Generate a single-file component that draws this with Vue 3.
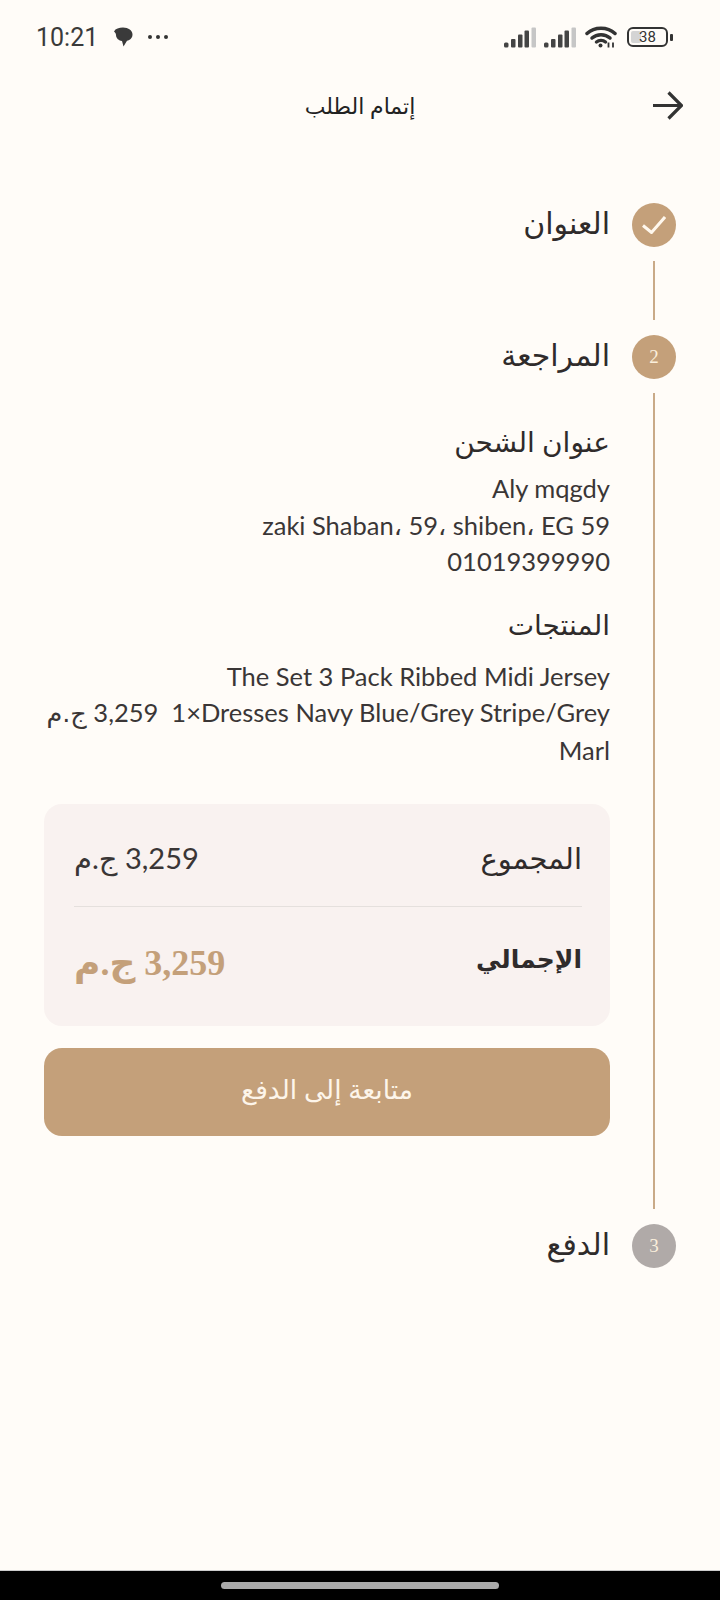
<script setup>
const steps = { done: 'العنوان', active: 'المراجعة', next: 'الدفع' }
</script>

<template>
  <div class="page">
    <div class="status" dir="ltr">
      <div class="status-left">
        <span class="time">10:21</span>
        <svg class="bubble" width="20" height="20" viewBox="0 0 20 20">
          <path d="M1 4.500C2.500 1.500 6 .5 10 .5c5.500 0 9.500 3 9.500 7 0 3.500-2.500 5.700-5.500 6.300L10.500 19.500 9 14C6 13.600 3 11.500 3 8 3 6.500 2 5.500 1 4.500z" fill="#3a3a3a" />
        </svg>
        <span class="dots"><i></i><i></i><i></i></span>
      </div>
      <div class="status-right">
        <svg width="32" height="21" viewBox="0 0 32 21">
          <rect x="0" y="15.500" width="4.500" height="5" rx="1.500" fill="#444" />
          <rect x="7" y="12" width="4.500" height="8.500" rx="1" fill="#444" />
          <rect x="14" y="7.500" width="4.500" height="13" rx="1" fill="#444" />
          <rect x="20.500" y="3.500" width="4.500" height="17" rx="1" fill="#444" />
          <rect x="27.500" y="0.500" width="4.500" height="20" rx="1" fill="#c6c6c6" />
        </svg>
        <svg width="32" height="21" viewBox="0 0 32 21">
          <rect x="0" y="15.500" width="4.500" height="5" rx="1.500" fill="#444" />
          <rect x="7" y="12" width="4.500" height="8.500" rx="1" fill="#444" />
          <rect x="14" y="7.500" width="4.500" height="13" rx="1" fill="#444" />
          <rect x="20.500" y="3.500" width="4.500" height="17" rx="1" fill="#444" />
          <rect x="27.500" y="0.500" width="4.500" height="20" rx="1" fill="#c6c6c6" />
        </svg>
        <svg width="32" height="22" viewBox="0 0 32 22" fill="none" stroke="#333" stroke-width="3.500" stroke-linecap="round">
          <path d="M2 7.500C9.500 .5 22.500 .5 30 7.500" />
          <path d="M7 12c5-4.500 13-4.500 18 0" />
          <path d="M11.500 16c2.500-2 6.500-2 9 0" />
          <circle cx="15.500" cy="19.500" r="2" fill="#333" stroke="none" />
          <path d="M23.500 16.500v5M28 16.500v5" stroke-width="1.800" stroke-linecap="butt" />
        </svg>
        <div class="battery"><span class="level"></span><span class="num">38</span></div>
        <span class="nub"></span>
      </div>
    </div>

    <header class="topbar">
      <span class="title">إتمام الطلب</span>
      <svg class="back" width="30" height="29" viewBox="0 0 30 29" fill="none" stroke="#333" stroke-width="3.200">
        <path d="M0 14.500h28M15.500 1.500l13 13-13 13" />
      </svg>
    </header>

    <main class="stepper" dir="rtl">
      <div class="step">
        <span class="dot">
          <svg width="24" height="18" viewBox="0 0 24 18" fill="none" stroke="#fff8ee" stroke-width="3">
            <path d="M1 9.500L9.500 16.500 23 1" />
          </svg>
        </span>
        <span class="step-label">{{ steps.done }}</span>
      </div>
      <div class="rail short"><span class="line"></span></div>
      <div class="step">
        <span class="dot">2</span>
        <span class="step-label">{{ steps.active }}</span>
      </div>
      <div class="body">
        <div class="rail long"><span class="line"></span></div>
        <div class="content">
          <h2 class="heading">عنوان الشحن</h2>
          <p class="line-text" dir="rtl">Aly mqgdy</p>
          <p class="line-text" dir="rtl">zaki Shaban، 59، shiben، EG 59</p>
          <p class="line-text" dir="rtl">01019399990</p>
          <h2 class="heading second">المنتجات</h2>
          <p class="line-text">The Set 3 Pack Ribbed Midi Jersey</p>
          <p class="line-text lr" dir="ltr"><bdi class="ar">ج.م</bdi> 3,259&nbsp;&nbsp;1×Dresses Navy Blue/Grey Stripe/Grey</p>
          <p class="line-text">Marl</p>
          <div class="card">
            <div class="row subtotal">
              <span class="label">المجموع</span>
              <span class="amount">3,259 ج.م</span>
            </div>
            <div class="row total">
              <span class="label strong">الإجمالي</span>
              <span class="amount big">3,259 ج.م</span>
            </div>
          </div>
          <button class="cta"><span class="cta-text">متابعة إلى الدفع</span></button>
        </div>
      </div>
      <div class="step">
        <span class="dot grey">3</span>
        <span class="step-label">{{ steps.next }}</span>
      </div>
    </main>

    <div class="navbar"><span class="home"></span></div>
  </div>
</template>

<style>
html, body { margin: 0; background: #fffcf8; }
</style>

<style scoped>
.page {
  width: 720px;
  height: 1600px;
  background: #fffcf8;
  overflow: hidden;
  font-family: "Lato", "DejaVu Sans", sans-serif;
  color: #2f2b2b;
  display: flex;
  flex-direction: column;
}
.status {
  height: 74px;
  box-sizing: border-box;
  padding: 0 47px 0 36px;
  display: flex;
  justify-content: space-between;
  align-items: center;
}
.status-left, .status-right { display: flex; align-items: center; }
.time { font: 25px "Roboto", sans-serif; color: #3a3a3a; }
.bubble { margin-left: 15px; }
.dots { display: flex; gap: 4px; margin-left: 15px; }
.dots i { width: 4px; height: 4px; border-radius: 50%; background: #333; }
.status-right svg + svg { margin-left: 8px; }
.status-right svg:nth-child(3) { margin-left: 9px; }
.battery {
  width: 41px;
  height: 20px;
  box-sizing: border-box;
  border: 2px solid #333;
  border-radius: 6px;
  margin-left: 10px;
  position: relative;
  display: flex;
  align-items: center;
  justify-content: center;
  overflow: hidden;
}
.level { position: absolute; left: 2px; top: 2px; bottom: 2px; width: 10px; background: #d4d4d4; border-radius: 2px; }
.num { position: relative; font: 15px "Roboto", sans-serif; color: #333; }
.nub { width: 3px; height: 7px; background: #333; margin-left: 2px; border-radius: 1px; }
.topbar {
  height: 62px;
  box-sizing: border-box;
  padding: 0 37px;
  display: grid;
  grid-template-columns: 1fr auto 1fr;
  align-items: center;
}
.title { grid-column: 2; font-size: 22px; font-weight: 400; white-space: nowrap; color: #222; }
.back { grid-column: 3; justify-self: end; }
.stepper { padding: 67px 44px 0; display: flex; flex-direction: column; }
.step { display: flex; align-items: center; gap: 22px; height: 44px; }
.dot {
  width: 44px;
  height: 44px;
  flex: none;
  border-radius: 50%;
  background: #c4a07a;
  color: #fbefdc;
  display: flex;
  align-items: center;
  justify-content: center;
  font: 19px "Liberation Serif", serif;
}
.dot.grey { background: #b0aaa8; }
.step-label { font-size: 30px; padding-bottom: 6px; }
.rail { width: 44px; display: flex; justify-content: center; }
.rail .line { width: 2px; background: #c9aa88; }
.rail.short { height: 59px; margin: 14px 0 15px; }
.rail.long { margin: 14px 0 15px; flex: none; }
.body { display: flex; gap: 22px; }
.content { flex: 1; padding-top: 44px; padding-bottom: 88px; min-width: 0; }
.heading { margin: 0 0 11px; font-size: 28px; font-weight: 400; line-height: 36px; text-align: start; }
.heading.second { margin: 26px 0 16px; }
.line-text { margin: 0; font-size: 25.500px; line-height: 36.500px; color: #3a3636; text-align: start; white-space: nowrap; }
.line-text.lr { text-align: right; }
.ar { font-family: "DejaVu Sans", sans-serif; }
.card {
  margin-top: 36px;
  height: 222px;
  box-sizing: border-box;
  background: #f9f2f0;
  border-radius: 18px;
  padding: 0 28px 0 30px;
  display: flex;
  flex-direction: column;
}
.row { display: flex; justify-content: space-between; align-items: center; }
.subtotal { height: 103px; padding-top: 6px; box-sizing: border-box; border-bottom: 1px solid #e5e0dd; }
.total { flex: 1; padding-bottom: 8px; }
.label { font-size: 29px; }
.amount { font-size: 29px; color: #3a3636; }
.strong { font-weight: 700; font-size: 25px; padding-bottom: 8px; }
.big { font-size: 36px; font-weight: 700; color: #c4a07a; font-family: "Liberation Serif", "DejaVu Sans", serif; }
.cta {
  display: block;
  width: 100%;
  height: 88px;
  margin-top: 22px;
  border: 0;
  border-radius: 18px;
  background: #c4a07a;
  color: #fdf5ea;
  font: 26.500px "Lato", "DejaVu Sans", sans-serif;
}
.cta-text { display: block; padding-bottom: 6px; }
.navbar {
  margin-top: auto;
  height: 30px;
  background: #000;
  border-top: 1px solid #ccc;
  box-sizing: border-box;
  display: flex;
  justify-content: center;
  padding-top: 11px;
}
.home { width: 278px; height: 7px; background: #aaa; border-radius: 4px; }
</style>
